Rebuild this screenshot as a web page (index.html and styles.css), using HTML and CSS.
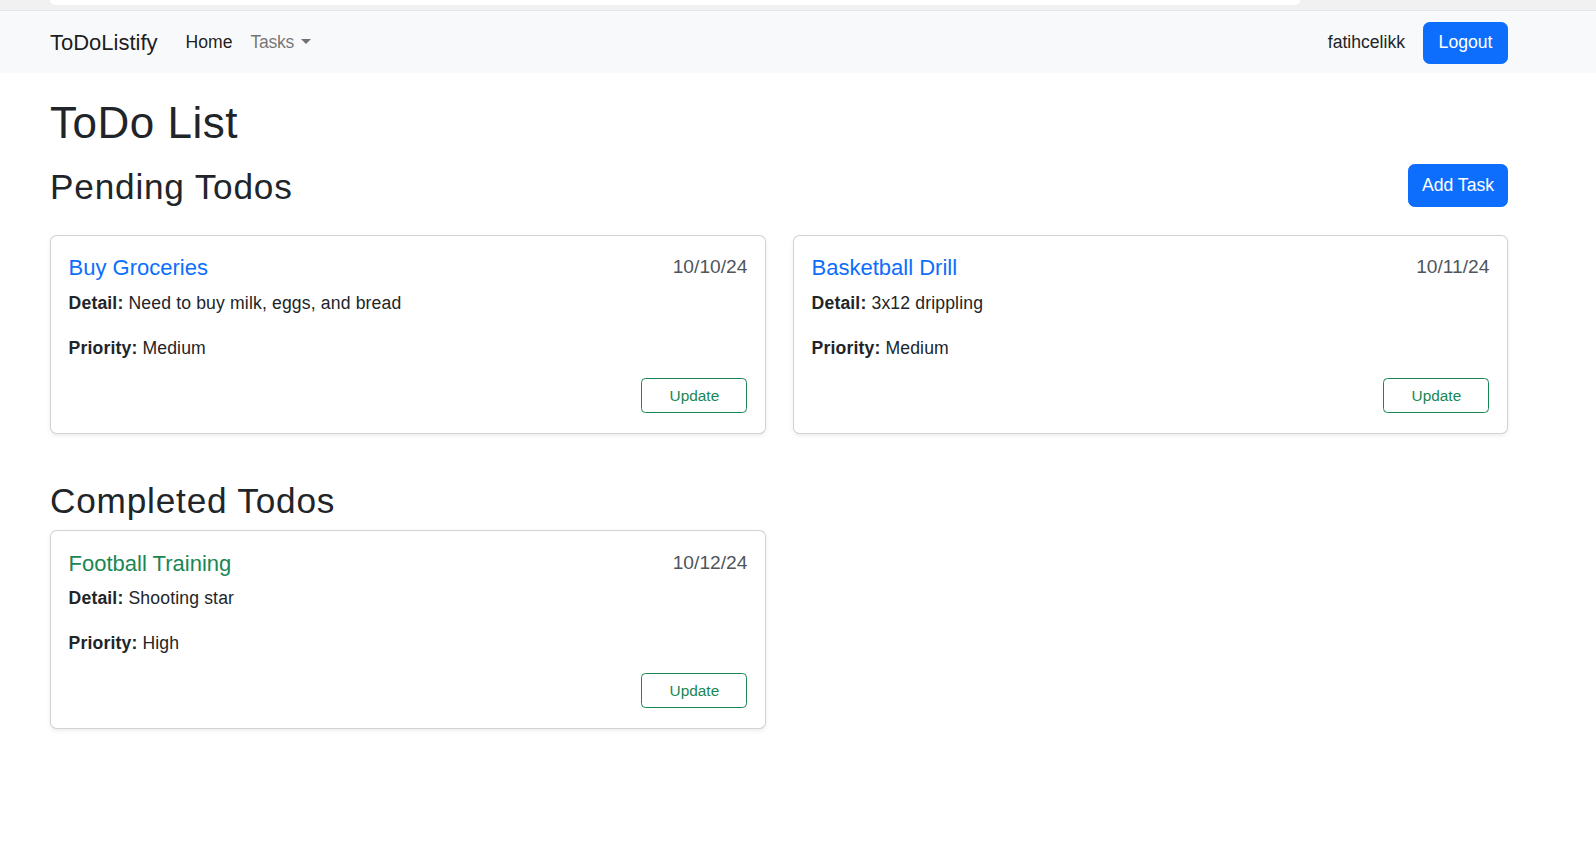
FILE: index.html
```html
<!DOCTYPE html>
<html lang="en">
<head>
<meta charset="utf-8">
<title>ToDoListify</title>
<link rel="stylesheet" href="styles.css">
</head>
<body>
<div class="topstrip"><div class="topstrip-box"></div></div>
<nav class="navbar">
  <a class="brand" href="#">ToDoListify</a>
  <ul class="nav-links">
    <li><a class="nav-link active" href="#">Home</a></li>
    <li><a class="nav-link dropdown-toggle" href="#">Tasks</a></li>
  </ul>
  <div class="nav-right">
    <span class="username">fatihcelikk</span>
    <a class="btn btn-primary btn-logout" href="#">Logout</a>
  </div>
</nav>
<main class="container">
  <h1 class="page-title">ToDo List</h1>
  <div class="section-head">
    <h2 class="section-title">Pending Todos</h2>
    <a class="btn btn-primary btn-add" href="#">Add Task</a>
  </div>
  <div class="card-grid">
    <div class="card">
      <div class="card-body">
        <div class="card-head">
          <h5 class="card-title pending">Buy Groceries</h5>
          <span class="card-date">10/10/24</span>
        </div>
        <p class="card-line"><strong>Detail:</strong> Need to buy milk, eggs, and bread</p>
        <p class="card-line priority"><strong>Priority:</strong> Medium</p>
        <div class="card-actions"><a class="btn-outline" href="#">Update</a></div>
      </div>
    </div>
    <div class="card">
      <div class="card-body">
        <div class="card-head">
          <h5 class="card-title pending">Basketball Drill</h5>
          <span class="card-date">10/11/24</span>
        </div>
        <p class="card-line"><strong>Detail:</strong> 3x12 drippling</p>
        <p class="card-line priority"><strong>Priority:</strong> Medium</p>
        <div class="card-actions"><a class="btn-outline" href="#">Update</a></div>
      </div>
    </div>
  </div>
  <h2 class="section-title completed-title">Completed Todos</h2>
  <div class="card-grid">
    <div class="card">
      <div class="card-body">
        <div class="card-head">
          <h5 class="card-title done">Football Training</h5>
          <span class="card-date">10/12/24</span>
        </div>
        <p class="card-line"><strong>Detail:</strong> Shooting star</p>
        <p class="card-line priority"><strong>Priority:</strong> High</p>
        <div class="card-actions"><a class="btn-outline" href="#">Update</a></div>
      </div>
    </div>
  </div>
</main>
</body>
</html>
```

FILE: styles.css
```css
* { box-sizing: border-box; }
html, body { margin: 0; padding: 0; }
body {
  font-family: "Liberation Sans", Arial, sans-serif;
  font-size: 17.6px;
  line-height: 1.5;
  color: #212529;
  background: #fff;
}
a { text-decoration: none; }

.topstrip {
  height: 11px;
  background: #f1f1f1;
  border-bottom: 1px solid #e6e6e6;
}
.topstrip-box {
  margin-left: 50px;
  width: 1250px;
  height: 5px;
  background: #fff;
  border-bottom-left-radius: 10px;
  border-bottom-right-radius: 10px;
}

.navbar {
  height: 62px;
  background: #f8f9fa;
  display: flex;
  align-items: center;
  padding: 0 88px 0 50px;
}
.brand {
  font-size: 22px;
  color: rgba(0,0,0,.9);
  margin-right: 19px;
  line-height: 1.5;
}
.nav-links {
  list-style: none;
  margin: 0;
  padding: 0;
  display: flex;
}
.nav-link {
  display: block;
  padding: 8px 9px;
  color: rgba(0,0,0,.55);
}
.nav-link.active { color: rgba(0,0,0,.9); }
.dropdown-toggle { letter-spacing: -0.3px; }
.dropdown-toggle::after {
  content: "";
  display: inline-block;
  margin-left: 7px;
  vertical-align: 4px;
  border-top: 5px solid;
  border-left: 5px solid transparent;
  border-right: 5px solid transparent;
}
.nav-right {
  margin-left: auto;
  display: flex;
  align-items: center;
}
.username {
  margin-right: 18px;
  color: #212529;
}

.btn {
  display: inline-flex;
  align-items: center;
  justify-content: center;
  border-radius: 6.6px;
  font-size: 17.6px;
}
.btn-primary {
  background: #0d6efd;
  color: #fff;
  border: 1px solid #0d6efd;
}
.btn-logout { width: 85px; height: 42px; margin-top: 1px; }
.btn-add { width: 100px; height: 43px; }

.container {
  width: 1458px;
  margin-left: 50px;
  padding-bottom: 40px;
}
.page-title {
  margin: 24px 0 0;
  font-size: 44px;
  font-weight: 500;
  line-height: 1.2;
  letter-spacing: 0.5px;
}
.section-head {
  margin-top: 14px;
  height: 43px;
  display: flex;
  align-items: center;
  justify-content: space-between;
}
.section-title {
  margin: 0;
  font-size: 35.2px;
  font-weight: 500;
  line-height: 1.2;
  letter-spacing: 0.8px;
}
.section-head .section-title { margin-top: 3px; }
.completed-title {
  margin: 46px 0 8px;
}

.card-grid {
  display: grid;
  grid-template-columns: 716px 715px;
  column-gap: 27px;
}
.section-head + .card-grid { margin-top: 28px; }

.card {
  border: 1px solid rgba(0,0,0,.175);
  border-radius: 6.6px;
  box-shadow: 0 2px 4px rgba(0,0,0,.075);
  background: #fff;
}
.card-body {
  padding: 19.6px 17.6px 20px;
}
.card-head {
  display: flex;
  justify-content: space-between;
  align-items: flex-start;
}
.card-title {
  margin: 0 0 7.8px;
  font-size: 22px;
  font-weight: 500;
  line-height: 1.2;
}
.card-title.pending { color: #0d6efd; }
.card-title.done { color: #198754; }
.card-date {
  color: #4f555b;
  font-size: 19.2px;
  line-height: 1.2;
}
.card-line {
  margin: 0;
  line-height: 26.4px;
  letter-spacing: 0.15px;
}
.card-line strong { font-weight: 700; color: #212529; }
.card-line.priority { margin-top: 18.6px; }
.card-actions {
  margin-top: 17px;
  display: flex;
  justify-content: flex-end;
}
.btn-outline {
  display: inline-flex;
  align-items: center;
  justify-content: center;
  width: 106px;
  height: 35px;
  border: 1px solid #198754;
  color: #198754;
  border-radius: 4.4px;
  font-size: 15.4px;
}
```
